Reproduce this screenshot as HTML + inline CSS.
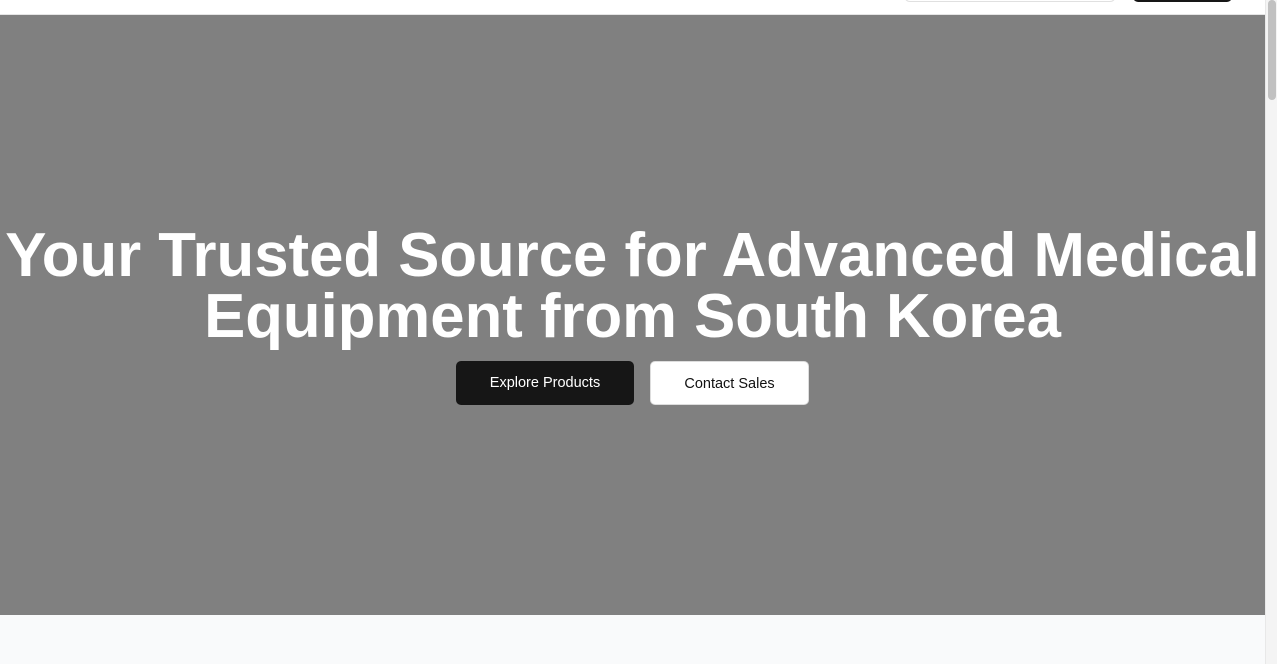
<!DOCTYPE html>
<html><head><style>
html,body{margin:0;padding:0;width:1277px;height:664px;overflow:hidden;background:#fff;font-family:"Liberation Sans",sans-serif}
.top{position:absolute;left:0;top:0;width:1265px;height:14px;background:#fff;border-bottom:1px solid #e5e5e5}
.inp{position:absolute;left:904px;top:-10px;width:210px;height:10px;border:1px solid #e0e0e0;border-radius:6px;background:#fff}
.btn0{position:absolute;left:1133px;top:-10px;width:99px;height:12px;background:#161616;border-radius:5px}
.hero{position:absolute;left:0;top:15px;width:1265px;height:600px;background:#808080}
h1{position:absolute;left:0;top:225px;width:1265px;margin:0;text-align:center;color:#fff;font-size:61.7px;line-height:61px;font-weight:bold}
.b{position:absolute;top:361px;height:44px;border-radius:5px;font-size:14.5px;line-height:44px;text-align:center;box-sizing:border-box}
.b1{left:456px;width:178px;background:#161616;color:#fff}
.b2{left:650px;width:159px;background:#fff;color:#111;border:1px solid #ddd}
.below{position:absolute;left:0;top:615px;width:1265px;height:49px;background:#f9fafb}
.sb{position:absolute;left:1265px;top:0;width:12px;height:664px;background:#f4f4f4;border-left:1px solid #e8e8e8;box-sizing:border-box}
.th{position:absolute;left:1268px;top:0;width:8px;height:100px;background:#c1c1c1;border-radius:4px}
</style></head><body>
<div class="top"><div class="inp"></div><div class="btn0"></div></div>
<div class="hero"></div>
<h1>Your Trusted Source for Advanced Medical<br>Equipment from South Korea</h1>
<div class="b b1">Explore Products</div>
<div class="b b2">Contact Sales</div>
<div class="below"></div>
<div class="sb"></div><div class="th"></div>
</body></html>
